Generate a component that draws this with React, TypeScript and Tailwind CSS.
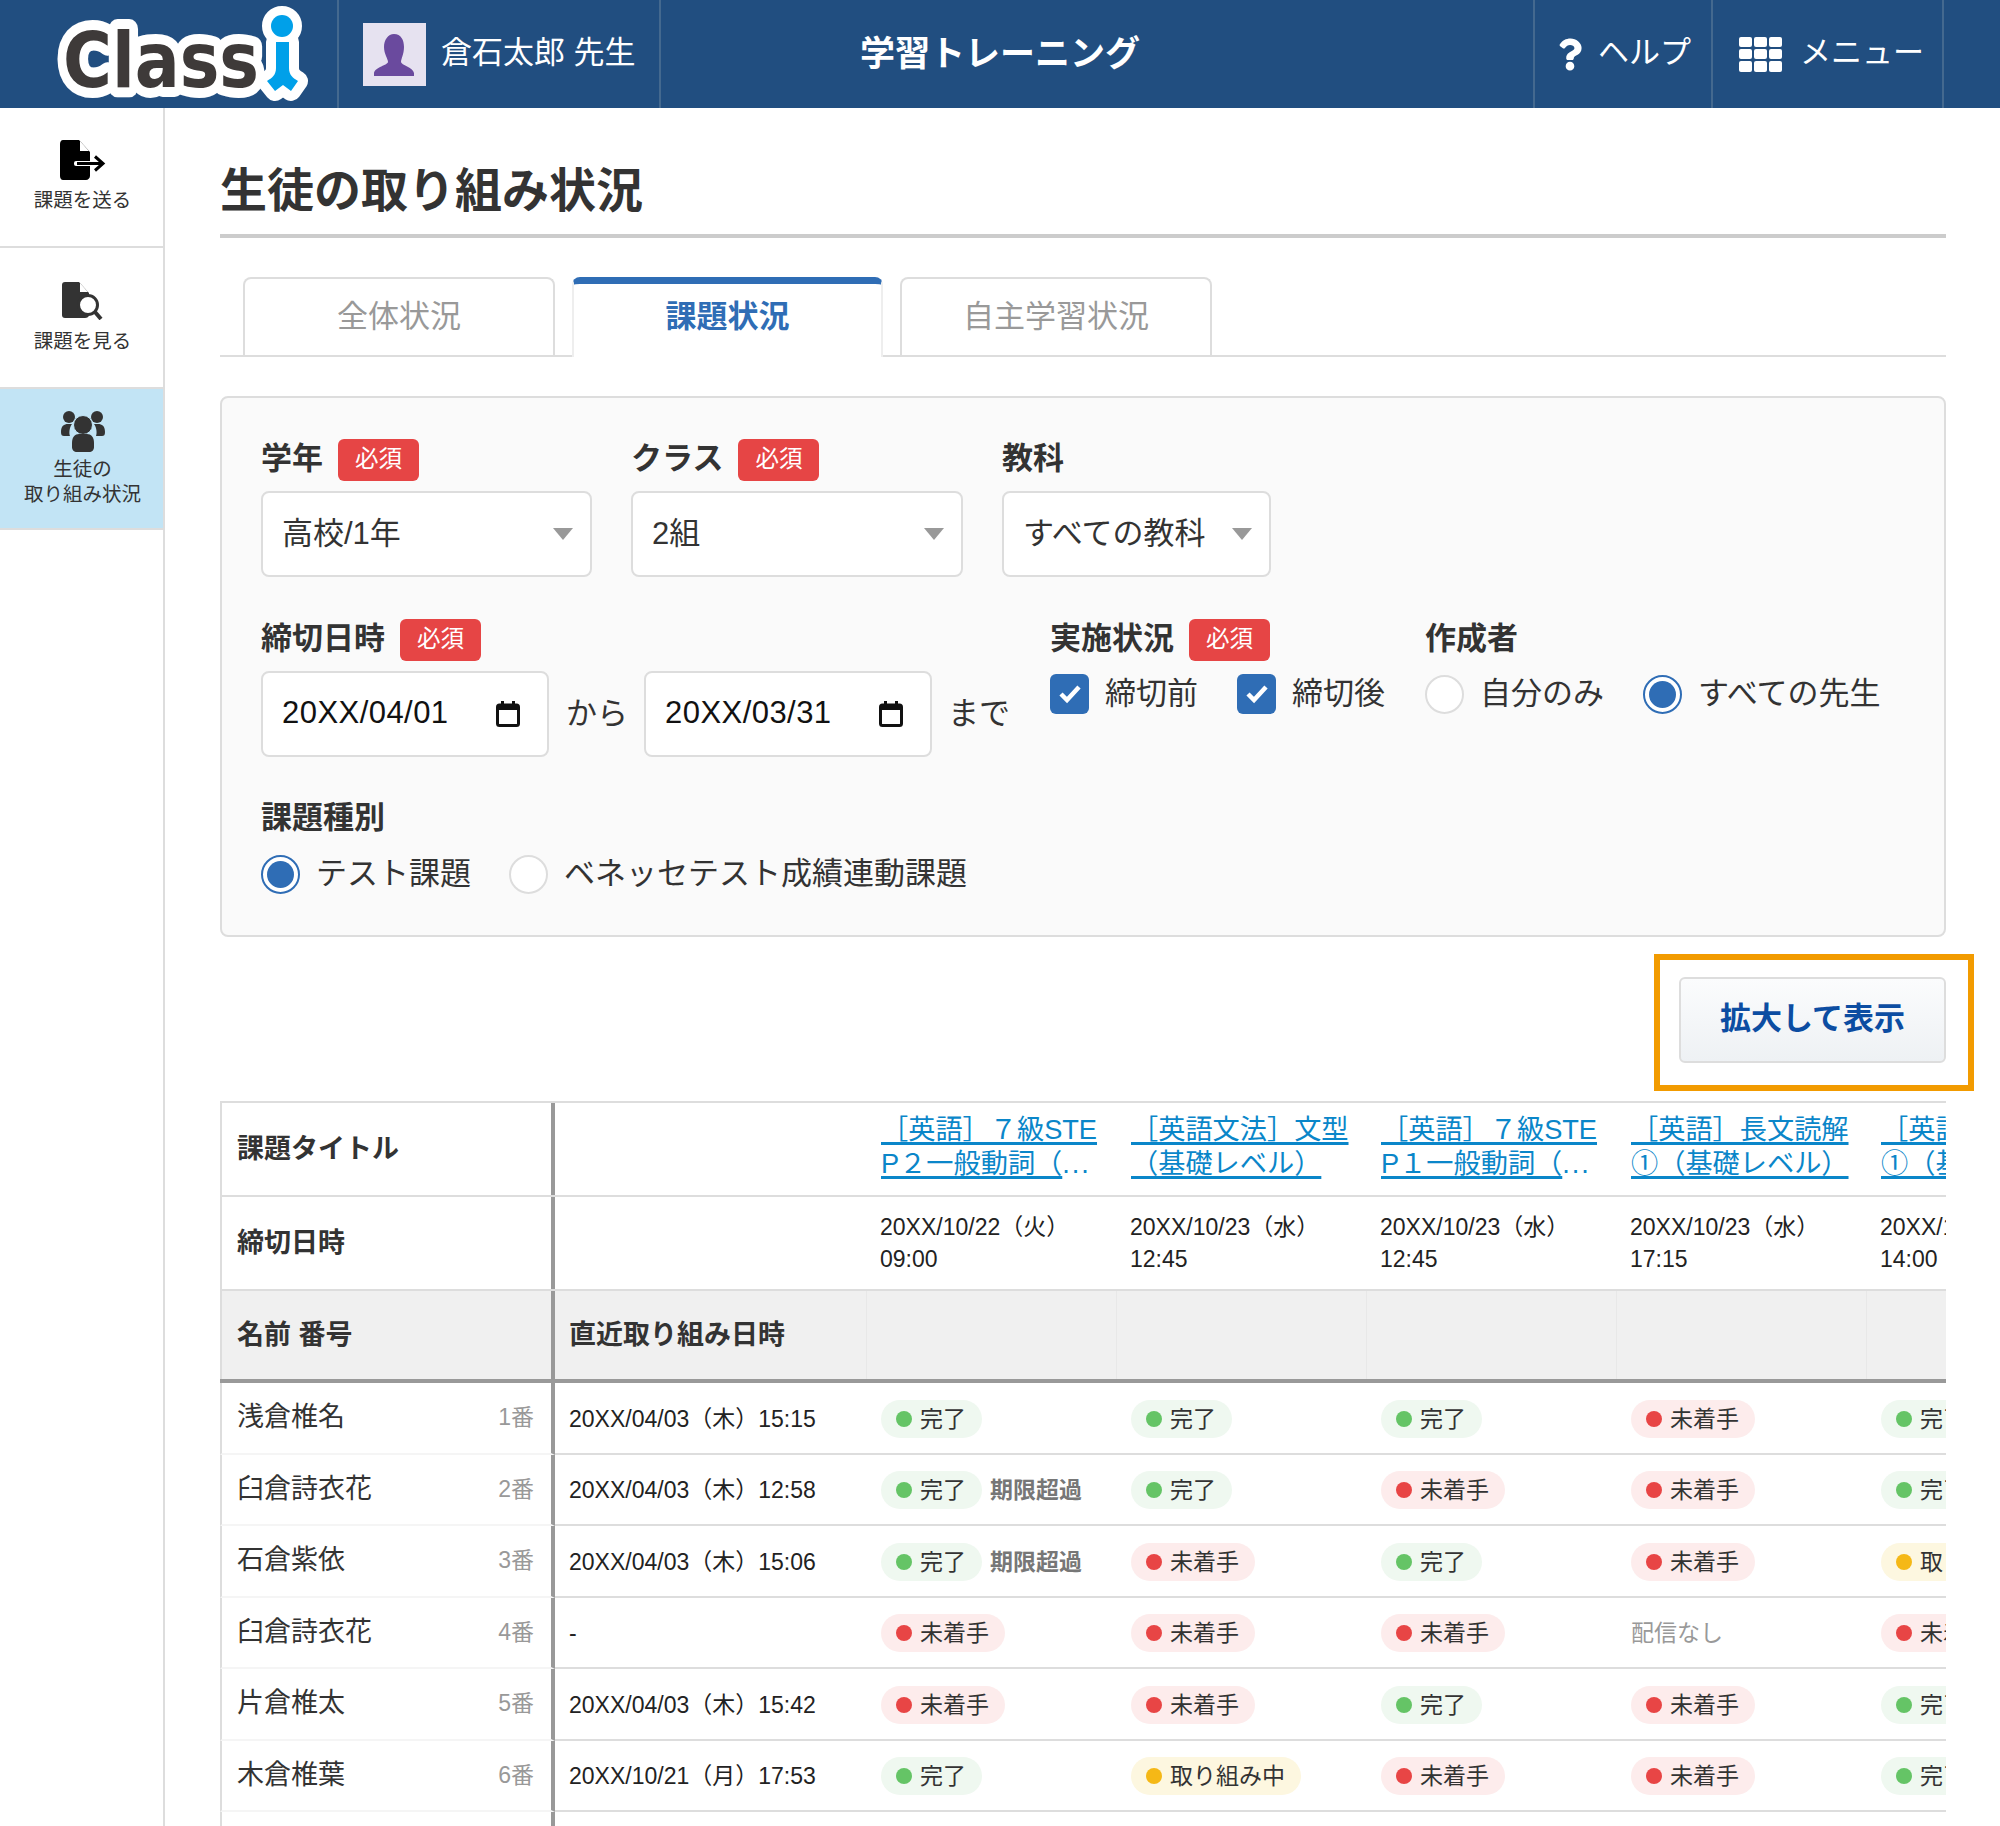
import { FaQuestion } from 'react-icons/fa';

type Status = 'done' | 'todo' | 'doing' | 'none';
type Cell = { status: Status; late?: boolean };
type Student = { name: string; no: string; last: string; cells: Cell[] };

const D: Cell = { status: 'done' };
const L: Cell = { status: 'done', late: true };
const T: Cell = { status: 'todo' };
const W: Cell = { status: 'doing' };
const N: Cell = { status: 'none' };

const assignments = [
  { line1: '［英語］７級STE', line2: 'P２一般動詞（', more: true, date: '20XX/10/22（火）', time: '09:00' },
  { line1: '［英語文法］文型', line2: '（基礎レベル）', more: false, date: '20XX/10/23（水）', time: '12:45' },
  { line1: '［英語］７級STE', line2: 'P１一般動詞（', more: true, date: '20XX/10/23（水）', time: '12:45' },
  { line1: '［英語］長文読解', line2: '①（基礎レベル）', more: false, date: '20XX/10/23（水）', time: '17:15' },
  { line1: '［英語］長文読解', line2: '①（基礎レベル）', more: false, date: '20XX/10/24（木）', time: '14:00' },
];

const students: Student[] = [
  { name: '浅倉椎名', no: '1番', last: '20XX/04/03（木）15:15', cells: [D, D, D, T, D] },
  { name: '臼倉詩衣花', no: '2番', last: '20XX/04/03（木）12:58', cells: [L, D, T, T, D] },
  { name: '石倉紫依', no: '3番', last: '20XX/04/03（木）15:06', cells: [L, T, D, T, W] },
  { name: '臼倉詩衣花', no: '4番', last: '-', cells: [T, T, T, N, T] },
  { name: '片倉椎太', no: '5番', last: '20XX/04/03（木）15:42', cells: [T, T, D, T, D] },
  { name: '木倉椎葉', no: '6番', last: '20XX/10/21（月）17:53', cells: [D, W, T, T, D] },
  { name: '', no: '', last: '', cells: [N, N, N, N, N] },
];

// Logo: real text with a fat white outline, the "i" is a drawing
function Logo() {
  const iShape = 'M276 42 H289 V68 C289 75 293 78 298 81 L291 91 L283 85 L275 91 L267 81 C272 78 276 75 276 68 Z';
  return (
    <svg width="339" height="108" viewBox="0 0 339 108">
      <text
        x="63"
        y="87"
        textLength="196"
        lengthAdjust="spacingAndGlyphs"
        fontFamily="'DejaVu Sans', sans-serif"
        fontWeight="700"
        fontSize="76"
        fill="#fff"
        stroke="#fff"
        strokeWidth="20"
        strokeLinejoin="round"
      >
        Class
      </text>
      <circle cx="282" cy="26" r="12" fill="#fff" stroke="#fff" strokeWidth="16" />
      <path d={iShape} fill="#fff" stroke="#fff" strokeWidth="20" strokeLinejoin="round" />
      <text
        x="63"
        y="87"
        textLength="196"
        lengthAdjust="spacingAndGlyphs"
        fontFamily="'DejaVu Sans', sans-serif"
        fontWeight="700"
        fontSize="76"
        fill="#3e3a39"
      >
        Class
      </text>
      <circle cx="282" cy="26" r="11" fill="#00a0e9" />
      <path d={iShape} fill="#00a0e9" />
    </svg>
  );
}

function SendIcon() {
  return (
    <svg width="46" height="40" viewBox="0 0 46 40">
      <path d="M3 0 H19 L30 12 V36 C30 38 28 40 26 40 H3 C1 40 0 38 0 36 V4 C0 2 1 0 3 0 Z" fill="#000" />
      <path d="M20 1 L29 11 H20 Z" fill="#fff" />
      <rect x="14" y="21" width="20" height="5" rx="2" fill="#fff" />
      <path d="M17 23.5 H42 M35 16.5 L43 23.5 L35 30.5" fill="none" stroke="#000" strokeWidth="3" />
    </svg>
  );
}

function ViewIcon() {
  return (
    <svg width="42" height="38" viewBox="0 0 42 38">
      <path d="M3 0 H17 L27 11 V33 C27 35 25 36 23 36 H3 C1 36 0 35 0 33 V3 C0 1 1 0 3 0 Z" fill="#333" />
      <path d="M18 1 L26 10 H18 Z" fill="#fff" />
      <circle cx="26" cy="23" r="9.5" fill="#fff" stroke="#333" strokeWidth="3" />
      <path d="M33 30 L39 37" stroke="#333" strokeWidth="4" />
    </svg>
  );
}

function StudentsIcon() {
  return (
    <svg width="44" height="42" viewBox="0 0 44 42">
      <circle cx="8" cy="7" r="6" fill="#333" />
      <circle cx="36" cy="7" r="6" fill="#333" />
      <path d="M0 22 C0 16 3 14 7 14 H11 C8 18 8 24 9 26 H3 C1 26 0 25 0 22 Z" fill="#333" />
      <path d="M44 22 C44 16 41 14 37 14 H33 C36 18 36 24 35 26 H41 C43 26 44 25 44 22 Z" fill="#333" />
      <circle cx="22" cy="15" r="9.5" fill="#333" stroke="#c2e4f5" strokeWidth="1" />
      <path d="M11 33 C11 27 14 24 18 24 H26 C30 24 33 27 33 33 V37 C33 40 31 42 28 42 H16 C13 42 11 40 11 37 Z" fill="#333" />
    </svg>
  );
}

function CalendarIcon() {
  return (
    <svg width="24" height="26" viewBox="0 0 24 26" className="shrink-0">
      <rect x="1.5" y="4" width="21" height="20.5" rx="2" fill="none" stroke="#111" strokeWidth="3" />
      <rect x="1.5" y="4" width="21" height="5" fill="#111" />
      <rect x="5" y="0" width="3" height="6" fill="#111" />
      <rect x="16" y="0" width="3" height="6" fill="#111" />
    </svg>
  );
}

function Required() {
  return (
    <span className="inline-flex h-[42px] w-[81px] items-center justify-center rounded-[6px] bg-[#e64545] text-[23.5px] text-white">
      必須
    </span>
  );
}

function Label({ text, required }: { text: string; required?: boolean }) {
  return (
    <div className="flex h-[42px] items-center gap-[15px]">
      <span className="pb-[2px] text-[31px] font-bold text-[#333]">{text}</span>
      {required && <Required />}
    </div>
  );
}

function SelectBox({ value, className }: { value: string; className: string }) {
  return (
    <div
      className={`mt-[10px] flex h-[86px] items-center justify-between rounded-[8px] border-2 border-[#ddd] bg-white pl-[19px] pr-[17px] text-[31px] text-[#333] ${className}`}
    >
      <span className="pt-[1px]">{value}</span>
      <svg width="20" height="12" viewBox="0 0 20 12">
        <path d="M0 0 H20 L10 12 Z" fill="#999" />
      </svg>
    </div>
  );
}

function DateBox({ value }: { value: string }) {
  return (
    <div className="flex h-[86px] w-[288px] items-center justify-between rounded-[8px] border-2 border-[#ddd] bg-white pl-[19px] pr-[27px] text-[#111]">
      <span className="pb-[1px] text-[31px] tracking-[0.45px]">{value}</span>
      <CalendarIcon />
    </div>
  );
}

function Check({ text }: { text: string }) {
  return (
    <div className="flex items-center gap-[16px]">
      <span className="flex h-[40px] w-[39px] items-center justify-center rounded-[6px] bg-[#2f6db5]">
        <svg width="24" height="20" viewBox="0 0 24 20">
          <path d="M3 10 L9 16 L21 3" fill="none" stroke="#fff" strokeWidth="4.5" />
        </svg>
      </span>
      <span className="text-[31px] text-[#333]">{text}</span>
    </div>
  );
}

function Radio({ text, on }: { text: string; on?: boolean }) {
  return (
    <div className="flex items-center gap-[16px]">
      {on ? (
        <span className="flex h-[39px] w-[39px] items-center justify-center rounded-full border-2 border-[#2f6db5] bg-white">
          <span className="h-[27px] w-[27px] rounded-full bg-[#2f6db5]" />
        </span>
      ) : (
        <span className="h-[39px] w-[39px] rounded-full border-2 border-[#ddd] bg-white" />
      )}
      <span className="text-[31px] text-[#333]">{text}</span>
    </div>
  );
}

function Pill({ status }: { status: Status }) {
  if (status === 'done') {
    return (
      <span className="inline-flex h-[38px] shrink-0 items-center gap-[8px] rounded-full bg-[#eff8f0] pl-[15px] pr-[16px] text-[23px] text-[#333]">
        <span className="h-[16px] w-[16px] rounded-full bg-[#65c466]" />
        完了
      </span>
    );
  }
  if (status === 'todo') {
    return (
      <span className="inline-flex h-[38px] shrink-0 items-center gap-[8px] rounded-full bg-[#fdecec] pl-[15px] pr-[16px] text-[23px] text-[#333]">
        <span className="h-[16px] w-[16px] rounded-full bg-[#e84545]" />
        未着手
      </span>
    );
  }
  return (
    <span className="inline-flex h-[38px] shrink-0 items-center gap-[8px] rounded-full bg-[#fdf7e0] pl-[15px] pr-[16px] text-[23px] text-[#333]">
      <span className="h-[16px] w-[16px] rounded-full bg-[#f5b816]" />
      取り組み中
    </span>
  );
}

export default function App() {
  return (
    <div className="flex h-[1826px] w-[2000px] flex-col overflow-hidden bg-white text-[#333] [font-family:'Liberation_Sans','Noto_Sans_CJK_JP',sans-serif] [text-spacing-trim:space-all]">
      {/* Header */}
      <header className="flex h-[108px] shrink-0 bg-[#214e80] text-white">
        <div className="w-[339px] shrink-0 border-r-2 border-[#44698f]">
          <Logo />
        </div>
        <div className="flex w-[322px] shrink-0 items-center gap-[15px] border-r-2 border-[#44698f] pl-[24px]">
          <svg width="63" height="63" viewBox="0 0 63 63" className="shrink-0">
            <rect width="63" height="63" fill="#e6e2f0" />
            <path
              d="M31 11 C38 11 41 17 41 24 C41 31 38 36 38 39 C38 42 50 44 51 50 V53 H11 V50 C12 44 25 42 25 39 C25 36 21 31 21 24 C21 17 25 11 31 11 Z"
              fill="#6a4a9e"
            />
          </svg>
          <span className="whitespace-nowrap pb-[2px] text-[31px]">倉石太郎 先生</span>
        </div>
        <div className="flex w-[872px] shrink-0 items-center pl-[199px] text-[35px] font-bold">学習トレーニング</div>
        <div className="flex w-[180px] shrink-0 items-center gap-[16px] border-x-2 border-[#44698f] pl-[23px]">
          <FaQuestion className="h-[33px] w-[24px]" />
          <span className="pb-[2px] text-[31px]">ヘルプ</span>
        </div>
        <div className="flex w-[231px] shrink-0 items-center gap-[18px] border-r-2 border-[#44698f] pl-[26px]">
          <div className="grid h-[35px] w-[43px] grid-cols-3 gap-[2px]">
            {Array.from({ length: 9 }).map((_, i) => (
              <span key={i} className="rounded-[2px] bg-white" />
            ))}
          </div>
          <span className="pb-[2px] text-[31px]">メニュー</span>
        </div>
      </header>

      <div className="flex flex-1">
        {/* Side menu */}
        <aside className="w-[165px] shrink-0 border-r-2 border-[#ddd]">
          <div className="flex h-[140px] flex-col items-center border-b-2 border-[#ddd] pl-[2px] pt-[32px] text-[19.5px]">
            <SendIcon />
            <span className="mt-[6px]">課題を送る</span>
          </div>
          <div className="flex h-[141px] flex-col items-center border-b-2 border-[#ddd] pl-[2px] pt-[34px] text-[19.5px]">
            <ViewIcon />
            <span className="mt-[7px]">課題を見る</span>
          </div>
          <div className="flex h-[141px] flex-col items-center border-b-2 border-[#ddd] bg-[#c2e4f5] pl-[2px] pt-[21px] text-[19.5px] leading-[25px]">
            <StudentsIcon />
            <span className="mt-[5px]">生徒の</span>
            <span>取り組み状況</span>
          </div>
        </aside>

        <main className="flex-1 px-[55px]">
          <h1 className="flex h-[130px] items-end border-b-4 border-[#ccc] pb-[8px] text-[47px] font-bold text-[#333]">
            生徒の取り組み状況
          </h1>

          {/* Tabs */}
          <div className="mt-[39px] flex h-[80px] gap-[17px] border-b-2 border-[#ddd] pl-[23px]">
            <div className="flex h-[78px] w-[312px] items-center justify-center rounded-t-[8px] border-2 border-b-0 border-[#ddd] text-[31px] text-[#999]">
              全体状況
            </div>
            <div className="flex h-[80px] w-[311px] items-center justify-center rounded-t-[8px] border-x-2 border-t-[7px] border-x-[#eee] border-t-[#2f6db5] bg-white pb-[7px] text-[31px] font-bold text-[#2f6db5]">
              課題状況
            </div>
            <div className="flex h-[78px] w-[312px] items-center justify-center rounded-t-[8px] border-2 border-b-0 border-[#ddd] text-[31px] text-[#999]">
              自主学習状況
            </div>
          </div>

          {/* Filters */}
          <section className="mt-[39px] h-[541px] rounded-[8px] border-2 border-[#ddd] bg-[#fafafa] pl-[39px] pt-[41px]">
            <div className="flex gap-[39px]">
              <div>
                <Label text="学年" required />
                <SelectBox value="高校/1年" className="w-[331px]" />
              </div>
              <div>
                <Label text="クラス" required />
                <SelectBox value="2組" className="w-[332px]" />
              </div>
              <div>
                <Label text="教科" />
                <SelectBox value="すべての教科" className="w-[269px]" />
              </div>
            </div>

            <div className="mt-[42px] flex">
              <div className="w-[789px] shrink-0">
                <Label text="締切日時" required />
                <div className="mt-[10px] flex items-center">
                  <DateBox value="20XX/04/01" />
                  <span className="ml-[17px] mr-[16px] text-[31px]">から</span>
                  <DateBox value="20XX/03/31" />
                  <span className="ml-[16px] text-[31px]">まで</span>
                </div>
              </div>
              <div className="w-[375px] shrink-0">
                <Label text="実施状況" required />
                <div className="mt-[10px] flex gap-[39px]">
                  <Check text="締切前" />
                  <Check text="締切後" />
                </div>
              </div>
              <div>
                <Label text="作成者" />
                <div className="mt-[10px] flex gap-[39px]">
                  <Radio text="自分のみ" />
                  <Radio text="すべての先生" on />
                </div>
              </div>
            </div>

            <div className="mt-[41px]">
              <Label text="課題種別" />
              <div className="mt-[11px] flex gap-[38px]">
                <Radio text="テスト課題" on />
                <Radio text="ベネッセテスト成績連動課題" />
              </div>
            </div>
          </section>

          {/* Zoom button, with the orange callout over it */}
          <div className="mt-[40px] flex justify-end">
            <button
              type="button"
              className="relative h-[86px] w-[267px] rounded-[6px] border-2 border-[#ddd] bg-gradient-to-b from-[#fbfcfd] to-[#eef1f4] pb-[2px] text-[31px] font-bold text-[#0c4da2]"
            >
              拡大して表示
              <span className="absolute -bottom-[30px] -left-[27px] -right-[30px] -top-[25px] border-[6px] border-[#f29b00]" />
            </button>
          </div>

          {/* Results table */}
          <div className="mt-[38px] w-[1726px] overflow-hidden border-t-2 border-[#ddd]">
            <div className="flex h-[94px] border-b-2 border-[#ddd]">
              <div className="flex w-[335px] shrink-0 items-center border-l-2 border-r-4 border-l-[#ddd] border-r-[#999] pl-[15px] text-[27px] font-bold">
                課題タイトル
              </div>
              <div className="w-[311px] shrink-0" />
              {assignments.map((a, i) => (
                <div key={i} className="w-[250px] shrink-0 pl-[15px] pt-[10px] text-[27.2px] leading-[34px] text-[#0a86c9]">
                  <div className="whitespace-nowrap">
                    <span className="underline decoration-[3px] underline-offset-[3px] [text-decoration-skip-ink:none]">{a.line1}</span>
                  </div>
                  <div className="whitespace-nowrap">
                    <span className="underline decoration-[3px] underline-offset-[3px] [text-decoration-skip-ink:none]">{a.line2}</span>
                    {a.more && <span className="tracking-[2px]">...</span>}
                  </div>
                </div>
              ))}
            </div>

            <div className="flex h-[94px] border-b-2 border-[#ddd]">
              <div className="flex w-[335px] shrink-0 items-center border-l-2 border-r-4 border-l-[#ddd] border-r-[#999] pl-[15px] text-[27px] font-bold">
                締切日時
              </div>
              <div className="w-[311px] shrink-0" />
              {assignments.map((a, i) => (
                <div key={i} className="flex w-[250px] shrink-0 flex-col justify-center whitespace-nowrap pl-[14px] text-[23px] leading-[32px] text-[#222]">
                  <span>{a.date}</span>
                  <span>{a.time}</span>
                </div>
              ))}
            </div>

            <div className="flex h-[92px] border-b-4 border-[#999] bg-[#f0f0f0]">
              <div className="flex w-[335px] shrink-0 items-center border-l-2 border-r-4 border-l-[#ddd] border-r-[#999] pl-[15px] text-[27px] font-bold">
                名前 番号
              </div>
              <div className="flex w-[311px] shrink-0 items-center pl-[14px] text-[27px] font-bold">直近取り組み日時</div>
              {assignments.map((_, i) => (
                <div key={i} className="w-[250px] shrink-0 border-l border-[#e8e8e8]" />
              ))}
            </div>

            {students.map((s, r) => (
              <div key={r} className="flex h-[71.5px]">
                <div className="flex w-[335px] shrink-0 items-center justify-between border-b-2 border-l-2 border-r-4 border-b-[#f5f5f5] border-l-[#ddd] border-r-[#999] pb-[1px] pl-[15px] pr-[17px]">
                  <span className="text-[27px]">{s.name}</span>
                  <span className="text-[23px] text-[#999]">{s.no}</span>
                </div>
                <div className="flex w-[311px] shrink-0 items-center whitespace-nowrap border-b-2 border-[#ddd] pl-[14px] pt-[2px] text-[23px] text-[#222]">
                  {s.last}
                </div>
                {s.cells.map((c, i) => (
                  <div key={i} className="flex w-[250px] shrink-0 items-center gap-[8px] whitespace-nowrap border-b-2 border-[#ddd] pl-[15px] pt-[2px] text-[23px]">
                    {r < 6 && c.status === 'none' && <span className="text-[#999]">配信なし</span>}
                    {c.status !== 'none' && <Pill status={c.status} />}
                    {c.late && <span className="font-bold text-[#777]">期限超過</span>}
                  </div>
                ))}
              </div>
            ))}
          </div>
        </main>
      </div>
    </div>
  );
}
